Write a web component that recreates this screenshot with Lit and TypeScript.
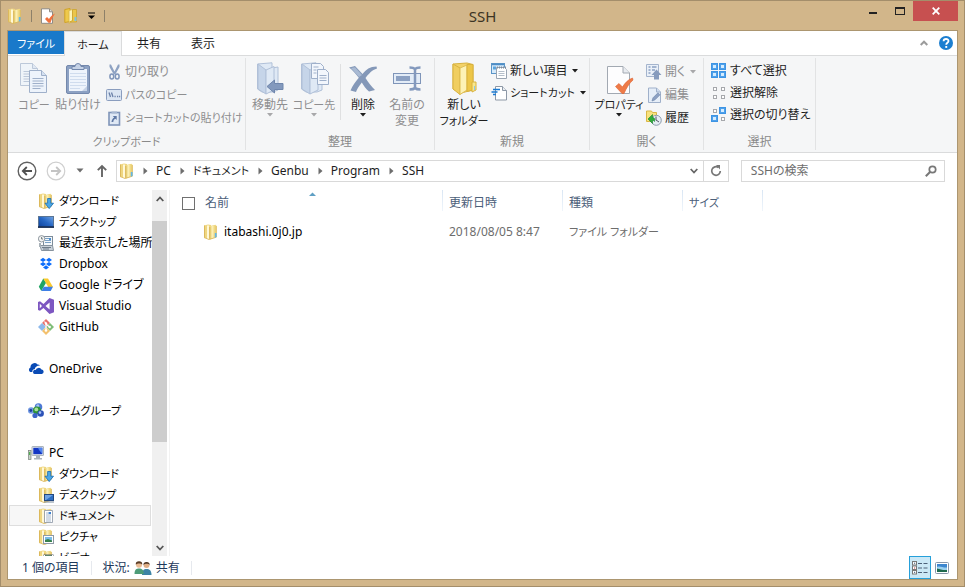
import { LitElement, html, css, svg, nothing, TemplateResult, SVGTemplateResult } from "lit";
import { customElement, state } from "lit/decorators.js";
import { classMap } from "lit/directives/class-map.js";

const icon = (w: number, h: number, body: SVGTemplateResult): TemplateResult =>
  html`<svg width=${w} height=${h} viewBox="0 0 ${w} ${h}" aria-hidden="true">${body}</svg>`;

const folderBase = svg`
  <path d="M1 1.500 L5 .5 L8 1 V13 L6 15.500 L1 13.500Z" fill="#efd680"/>
  <path d="M1.500 1.500 V13.500" stroke="#dcb95c"/>
  <path d="M7 2 L12.500 .8 L13.500 1.800 V13 L7 15.500Z" fill="#f0d983"/>
  <path d="M13.200 2 V13" stroke="#dcb95c"/>
  <path d="M5 1.500 V15" stroke="#fff8d8" stroke-width="2"/>
  <path d="M6.800 3 V15.200" stroke="#d0a94c" stroke-width=".8"/>
  <path d="M9.500 2 V14" stroke="#fbeeb4" stroke-width="2"/>
  <path d="M1 13.500 L6 15.500 L13.500 13.200" fill="none" stroke="#d9b658" stroke-width=".8"/>`;

const folder16 = icon(16, 16, svg`${folderBase}<path d="M11.800 9 h1.800 v4 l-1.800 .8Z" fill="#62b7e6"/>`);
const folderQuick = icon(16, 16, svg`<path d="M.8 1.500 L6 .5 V13.500 L.8 14.500Z" fill="#eec94c" stroke="#cfa227"/><path d="M5 2.500 L8.500 1.500 V13 L5 15.500Z" fill="#fdf4b8" stroke="#d7b549" stroke-width=".8"/><path d="M8.500 1.500 H12.500 V14 H5.500 L8.500 12.500Z" fill="#eac64b" stroke="#cda52e" stroke-width=".8"/><path d="M10.500 9 h2 v4 h-2Z" fill="#7cc3e8"/>`);
const folderDown = icon(16, 16, svg`${folderBase}<path d="M9.600 5.500 h3.200 v4.700 h2.700 L11.200 15.600 L7 10.200 h2.600Z" fill="#4aa7e8" stroke="#1769ae" stroke-width=".8"/>`);
const folderDesk = icon(16, 16, svg`${folderBase}<rect x="6.500" y="7.500" width="9" height="6" fill="#2d6fc4" stroke="#24497f"/><path d="M7 8 h8 L8 13 H7Z" fill="#6da3e4"/><path d="M6 15 h10" stroke="#7d8b9c"/>`);
const folderDoc = icon(16, 16, svg`${folderBase}<path d="M6.500 2.500 h8 v12 h-8Z" fill="#fff" stroke="#8a96a5" stroke-width=".8"/><path d="M8 5 h2 M8 7 h5 M8 9 h5 M8 11 h5 M8 13 h5" stroke="#90a6c0" stroke-width=".8"/><rect x="10.500" y="4" width="2.500" height="2" fill="#3e82d0"/>`);
const folderPic = icon(16, 16, svg`${folderBase}<rect x="5.500" y="6.500" width="10" height="8" fill="#fff" stroke="#8f9aa6"/><rect x="7" y="8" width="7" height="5" fill="#79bce8"/><path d="M7 13 v-2 l3 -1 4 1.500 V13Z" fill="#38814c"/>`);
const folderVid = icon(16, 16, svg`${folderBase}<rect x="5.500" y="4.500" width="10" height="10" fill="#5a6470"/><rect x="7.500" y="5.500" width="6" height="4" fill="#62a96a"/><path d="M6.500 5 V14 M14.500 5 V14" stroke="#fff" stroke-dasharray="1 1"/>`);
const desktop = icon(16, 16, svg`<defs><linearGradient id="dk" x1="0" y1="1" x2="1" y2="0"><stop offset="0" stop-color="#0d3f98"/><stop offset=".5" stop-color="#2566c4"/><stop offset="1" stop-color="#72a5e4"/></linearGradient></defs><rect x=".5" y="2.500" width="15" height="11" fill="url(#dk)" stroke="#5b7594"/><path d="M0 13 h16" stroke="#1b2f52" stroke-width="1.600"/>`);
const recent = icon(16, 16, svg`<rect x="5.500" y="1.500" width="9" height="9" fill="#f4f8fb" stroke="#7d8c9a"/><path d="M7 3.500 h4 M7 5.500 h6 M7 7.500 h6" stroke="#7aa1c6"/><rect x="11" y="3" width="2" height="2" fill="#4d8fd0"/><circle cx="3.600" cy="3.800" r="3.200" fill="#f3f3f3" stroke="#8d979f"/><path d="M3.600 2 V4 H5" stroke="#566" fill="none" stroke-width=".8"/><path d="M2 10.500 h12.500 l1 5 h-12Z" fill="#c9d1d9" stroke="#87939e"/><path d="M4 12.500 h9 M5 14 h6" stroke="#6f7d8a"/><path d="M2 8 V12" stroke="#a8b1b8" stroke-width="2"/>`);
const dropbox = icon(16, 16, svg`<g fill="#0d6efc"><path d="M5 1.800 L8 3.900 L5 6 L2 3.900Z"/><path d="M11 1.800 L14 3.900 L11 6 L8 3.900Z"/><path d="M5 6 L8 8.100 L5 10.200 L2 8.100Z"/><path d="M11 6 L14 8.100 L11 10.200 L8 8.100Z"/><path d="M8 9.200 L11 11.400 L8 13.500 L5 11.400Z"/></g>`);
const gdrive = icon(16, 16, svg`<path d="M5.300 1.500 L.8 9.800 L3.300 14 L8 5.700Z" fill="#1fa463"/><path d="M5.300 1.500 H10 L15 10 H10.200Z" fill="#fbc92c"/><path d="M5.800 9.800 H15 L12.700 14 H3.300Z" fill="#3e7fe6"/>`);
const vstudio = icon(16, 16, svg`<path d="M11.500 0 L16 1.800 V14.200 L11.500 16 L5.500 10 L2 12.800 L0 12 V4 L2 3.200 L5.500 6 Z M11.600 4.600 L7.500 8 L11.600 11.400Z M1.800 5.800 V10.200 L4 8Z" fill="#7d57c1" fill-rule="evenodd"/>`);
const github = icon(16, 16, svg`<path d="M8 0 L12 4 L8 8 L4 4Z" fill="#e9726b"/><path d="M4 4 L8 8 L4 12 L0 8Z" fill="#8db9ec"/><path d="M12 4 L16 8 L12 12 L8 8Z" fill="#7fbd78"/><path d="M8 8 L12 12 L8 16 L4 12Z" fill="#f3c06c"/><path d="M6.500 2.500 L8 4.500 V12 M8 5 L11.500 8" fill="none" stroke="#fff" stroke-width="1.200"/><circle cx="8" cy="4.500" r="1.200" fill="#fff"/><circle cx="8" cy="11.500" r="1.300" fill="#fff"/><circle cx="11.700" cy="8" r="1.200" fill="#fff"/>`);
const onedrive = icon(16, 16, svg`<path d="M2.200 11 A2.500 2.500 0 0 1 2.500 6.500 A4 4 0 0 1 9.500 3.500 A3 3 0 0 1 12 4.500 C8.500 4.500 7 6.500 6.800 8 C4.500 8.300 4 10 4.500 11Z" fill="#0a4bb5"/><path d="M6.500 13 A2 2 0 0 1 7.700 9 A3.200 3.200 0 0 1 13.500 8.500 A2.300 2.300 0 0 1 14 13Z" fill="#0a4bb5"/>`);
const homegroup = icon(16, 16, svg`<circle cx="3.200" cy="7.500" r="3.200" fill="#6f97e2"/><circle cx="2.800" cy="7.500" r="1.400" fill="#1f3f9c"/><circle cx="10.500" cy="4" r="3.800" fill="#4d79d6"/><circle cx="9.800" cy="2.800" r="1.500" fill="#a9c4f5"/><circle cx="9" cy="7.500" r="4" fill="#2f9238"/><circle cx="8.300" cy="6.400" r="1.900" fill="#a6e09a"/><circle cx="12.700" cy="10.500" r="3.200" fill="#2c52b8"/><circle cx="7" cy="12.500" r="2.600" fill="#3c63c8"/><circle cx="12" cy="9.600" r="1.300" fill="#a9c1f4"/>`);
const pc = icon(16, 16, svg`<rect x="4" y="1.500" width="11.500" height="9" rx=".5" fill="#e4e8ec" stroke="#9aa4ae" stroke-width=".8"/><rect x="5.300" y="2.800" width="9" height="6.400" fill="#1336c4"/><path d="M10 2.800 h4.300 v6 L11 5Z" fill="#5084ee"/><path d="M8 11 h4 v2 h2 v1.500 h-8 V13 h2Z" fill="#aab3bb"/><rect x=".5" y="5.500" width="2.500" height="9" fill="#c8d0c8" stroke="#76807a" stroke-width=".7"/><path d="M1.700 7 v3" stroke="#37a637"/>`);

const NAVY = "#8498b8";
const page = (x: number, y: number) => svg`<path d="M${x} ${y} h12 l5 5 v17 h-17Z" fill="#edf3fb" stroke="#9fb0ca"/><path d="M${x + 12} ${y} v5 h5" fill="#d5e1f1" stroke="#9fb0ca"/><path d="M${x + 3} ${y + 8} h11 M${x + 3} ${y + 10.5} h11 M${x + 3} ${y + 13} h11 M${x + 3} ${y + 15.5} h11 M${x + 3} ${y + 18} h8" stroke="#9fb0ca"/>`;
const bigCopy = icon(32, 34, svg`<g opacity=".65">${page(2.5, 1.5)}</g>${page(11.5, 8.5)}`);
const bigPaste = icon(32, 34, svg`<rect x="4.500" y="3.500" width="23" height="28" rx="1.500" fill="#8ca1c3" stroke="#7388ac"/><rect x="7" y="7" width="18" height="22" fill="#eef4fc"/><path d="M8 11.500 h16 M8 14.500 h16 M8 17.500 h16 M8 20.500 h16 M8 23.500 h16 M8 26.500 h10" stroke="#cfdcee"/><path d="M10 7.500 V4.500 H13 A3 3 0 0 1 19 4.500 H22 V7.500Z" fill="#c5d2e6" stroke="#7388ac"/><path d="M20 29 l5 -5 v5Z" fill="#c5d2e6"/>`);
const bigFolderShape = (a: string, b: string, s: string) => svg`<path d="M4.500 2 L19 .8 V6 L25 5 V28 L20 30 H9 L4.500 27Z" fill="${a}" stroke="${s}"/><path d="M5 2 L13 8 V32 L5 27Z" fill="${b}" stroke="${s}"/><path d="M13 8 L21 4.500 V28 L13 32Z" fill="${a}" stroke="${s}"/>`;
const bigMove = icon(34, 34, svg`${bigFolderShape("#dfe9f5", "#c6d5e9", "#b0c0d8")}<path d="M14 24.500 L21.500 18 V21.500 H30 V27.500 H21.500 V31Z" fill="#8399bd" stroke="#6f86ac"/>`);
const bigCopyTo = icon(34, 34, svg`${bigFolderShape("#dfe9f5", "#c6d5e9", "#b0c0d8")}<g fill="#f2f6fc" stroke="#9fb0ca"><path d="M14.500 1.500 h9 l3 3 v12 h-12Z"/><path d="M20.500 7.500 h8 l3 3 v12 h-11Z"/></g><path d="M22.500 13.500 h7 M22.500 16 h7 M22.500 18.500 h7 M16.500 5 h5 M16.500 8 h3 M16.500 11 h3" stroke="#9fb0ca"/>`);
const bigDelete = icon(32, 34, svg`<path d="M2 5.500 L8 4 L15.500 12 C19 7.500 23 4.500 29.500 4.500 L30 6.500 C25 8 21.500 12 18.500 16 C21 20 24 24 28 28 L22 29.500 C19 27 16.500 23.500 14.800 20.500 C12 24 9.500 28 9 30 L3.500 28.500 C5.500 24 8.500 19.500 11.800 15.800 C8.500 11.500 5.500 8 2 5.500Z" fill="${NAVY}"/><path d="M4 6 L8 5.200 L15 13 L12 15Z" fill="#a9bad3"/>`);
const bigRename = icon(32, 34, svg`<rect x="2.500" y="11.500" width="27" height="10" fill="#e3ecf7" stroke="#7f95b9"/><rect x="5" y="14" width="14" height="5" fill="#8ca1c3"/><path d="M18.500 5.500 C21 5.500 23 6 24 7 C25 6 27 5.500 29.500 5.500 M24 7 V26 M18.500 27.500 C21 27.500 23 27 24 26 C25 27 27 27.500 29.500 27.500" fill="none" stroke="#8399bd" stroke-width="2.500"/>`);
const bigNewFolder = icon(32, 34, svg`<path d="M5 2 L19 1 L25 2.500 V28 L13 31 L5 27Z" fill="#f3d268" stroke="#d8b23f"/><path d="M5 2 L12 6 V32.500 L5 27Z" fill="#f0ce60" stroke="#d8b23f"/><path d="M12 6 L19 3 V28 L12 32.500Z" fill="#fdf2b6" stroke="#e0bf55"/><path d="M19 2.500 L25 2.500 V28 L19 29.500Z" fill="#edc648" stroke="#d8b23f"/><path d="M24 20 h4 v8 l-4 2Z" fill="#f9e88e" stroke="#d8b23f"/><path d="M26.500 24 v4" stroke="#8cc8e8"/>`);
const bigProps = icon(32, 34, svg`<path d="M4.500 4.500 H20 L26.500 11 V31.500 H4.500Z" fill="#fdfdfe" stroke="#a2a9b2"/><path d="M20 4.500 V11 H26.500" fill="#e8ebf0" stroke="#a2a9b2"/><path d="M12.500 24.500 L16 21.500 L19.500 25 C22 21 25 17.500 29.500 16 L30 18 C26 21.500 23.500 26 21 31.500 H19Z" fill="#ee7b48" stroke="#dd6230" stroke-width=".6"/>`);

const cut = icon(16, 16, svg`<path d="M3.500 .5 L5 .5 L8.500 7.500 L12 .5 H13.500 V3 L9.500 10 L8.500 10.500 L7.500 10 L3.500 3Z" fill="#8ea2c2"/><g fill="none" stroke="#8096ba" stroke-width="1.500"><ellipse cx="5.800" cy="12.500" rx="1.900" ry="2.500"/><ellipse cx="11.200" cy="12.500" rx="1.900" ry="2.500"/></g>`);
const pathCopy = icon(16, 16, svg`<rect x=".5" y="2.500" width="15" height="11" rx="1" fill="#dbe5f2" stroke="#8a9dbe"/><path d="M3 5.500 L4.500 10 M5.500 5.500 L7 10" stroke="#6b81a8" stroke-width="1.300"/><path d="M8.500 9.500 h1.200 M11 9.500 h1.200 M13 9.500 h1.200" stroke="#6b81a8" stroke-width="1.300"/>`);
const pasteLink = icon(16, 16, svg`<rect x="3" y="2.500" width="10.500" height="12.500" fill="#dfe8f4" stroke="#7f94b8" stroke-width="1.600"/><path d="M5.500 3.500 V1.500 H11 V3.500Z" fill="#a7b7d1"/><path d="M10.700 6 V10 L9.500 8.800 C8 9.500 7.300 10.500 7.300 12 L5.500 12 C5.600 10 6.500 8.300 8.200 7.400 L6.800 6Z" fill="#5f78a4"/>`);
const newItem = icon(16, 16, svg`<rect x=".5" y=".5" width="13" height="10" fill="#d6eafa" stroke="#5a95c8"/><path d="M1 1.500 h12" stroke="#4c8cc6" stroke-width="1.500"/><rect x="2" y="3.500" width="3" height="3" fill="#5ba4dc"/><path d="M5.500 4.500 h8 l2 2 v9 h-10Z" fill="#fff" stroke="#9aa5b2"/><path d="M6 4.500 h9" stroke="#7c8b9c" stroke-dasharray="1 1" stroke-width="2"/><path d="M7.500 8.500 h6 M7.500 10.500 h6 M7.500 12.500 h6" stroke="#b5bfca"/>`);
const shortcut = icon(16, 16, svg`<path d="M4.500 1.500 h7 l4 4 v9.500 h-11Z" fill="#fff" stroke="#8d98a6"/><path d="M11.500 1.500 v4 h4" fill="#e9edf2" stroke="#8d98a6"/><path d="M2 4.500 h7 M.5 7 h6 M2 9.500 h3" stroke="#1a7ad2" stroke-width="1.500"/>`);
const openIc = icon(16, 16, svg`<path d="M.5 .5 h12 v12 h-12Z" fill="#eaf0f8" stroke="#a4b4cd"/><path d="M2.500 3 h2 M6 3 h4.500 M2.500 6 h2 M6 6 h3 M2.500 9 h2" stroke="#8aa0c2" stroke-width="1.500"/><path d="M10.500 5.500 L15.500 11 H13 V15.500 H8 V11 H5.500Z" fill="#869bbd"/>`);
const edit = icon(16, 16, svg`<path d="M2.500 1 h8 l4 4 v10.500 h-12Z" fill="#e6eef8" stroke="#9fb0ca"/><path d="M10.500 1 v4 h4" fill="#d0ddef" stroke="#9fb0ca"/><path d="M6 14 L7 10.800 L12 5.800 L14 7.800 L9 12.800Z" fill="#8ca1c3" stroke="#7389ae" stroke-width=".7"/>`);
const history = icon(16, 16, svg`<path d="M.5 1 h5 l1 1.500 h4 v9 h-10Z" fill="#f8e27e" stroke="#d9b645"/><circle cx="10.300" cy="10.300" r="5" fill="#e5ecf3" stroke="#8b9bab"/><path d="M10 6.500 V10 L13 12" fill="none" stroke="#556"/><path d="M2 9 L6.500 4.500 V7.500 C9 7.500 9 10 8.500 11.500 C8 10.500 7.500 10.500 6.500 10.500 V13.500Z" fill="#2fae3a" stroke="#16832a" stroke-width=".6"/>`);
const cell = (x: number, y: number, on: boolean) => on
  ? svg`<rect x="${x + 0.5}" y="${y + 0.5}" width="6" height="6" fill="#4ea0ea" stroke="#3d94e4"/><rect x="${x + 2}" y="${y + 2}" width="3" height="3" fill="#d4ecff"/>`
  : svg`<rect x="${x + 2.5}" y="${y + 2.5}" width="3" height="3" fill="#fff" stroke="#a6a8ac"/>`;
const cells = (a: boolean, b: boolean, c: boolean, d: boolean) => icon(16, 16, svg`${cell(0, 0, a)}${cell(8, 0, b)}${cell(0, 8, c)}${cell(8, 8, d)}`);

const caret = icon(6, 4, svg`<path d="M0 0 H6 L3 3.500Z" fill="currentColor"/>`);
const chevron = icon(5, 8, svg`<path d="M.5 .5 L4.500 4 L.5 7.500Z" fill="#6d6d6d"/>`);
const people = icon(18, 16, svg`<path d="M8 15 c0 -5 2 -6 4.500 -6 c3 0 5 1.500 5 6Z" fill="#3d84a6"/><circle cx="12.500" cy="5" r="3" fill="#e0ae86"/><path d="M9.300 4.800 a3.300 3.300 0 0 1 6.500 0 c-1 -1.300 -4.500 -1.800 -6.500 0Z" fill="#4b3526"/><path d="M.5 14 c0 -4.500 2 -5.500 4.500 -5.500 c3 0 4.800 1.500 4.800 5.500Z" fill="#4d9c78"/><circle cx="5" cy="4.800" r="3" fill="#e9bb94"/><path d="M1.700 4.600 a3.300 3.300 0 0 1 6.600 0 c-1.200 -1.300 -4.500 -1.800 -6.600 0Z" fill="#5a3c26"/>`);

interface Cmd { label: string; icon: TemplateResult; off?: boolean; menu?: boolean; second?: string; }
interface Group { name: string; cls: string; big: Cmd[]; big2?: Cmd[]; small: Cmd[]; }

const groups: Group[] = [
  {
    name: "クリップボード", cls: "clip",
    big: [{ label: "コピー", icon: bigCopy, off: true }, { label: "貼り付け", icon: bigPaste, off: true }],
    small: [{ label: "切り取り", icon: cut, off: true }, { label: "パスのコピー", icon: pathCopy, off: true }, { label: "ショートカットの貼り付け", icon: pasteLink, off: true }],
  },
  {
    name: "整理", cls: "organize",
    big: [{ label: "移動先", icon: bigMove, off: true, menu: true }, { label: "コピー先", icon: bigCopyTo, off: true, menu: true }],
    big2: [{ label: "削除", icon: bigDelete, menu: true }, { label: "名前の", second: "変更", icon: bigRename, off: true }],
    small: [],
  },
  {
    name: "新規", cls: "create",
    big: [{ label: "新しい", second: "フォルダー", icon: bigNewFolder }],
    small: [{ label: "新しい項目", icon: newItem, menu: true }, { label: "ショートカット", icon: shortcut, menu: true }],
  },
  {
    name: "開く", cls: "open",
    big: [{ label: "プロパティ", icon: bigProps, menu: true }],
    small: [{ label: "開く", icon: openIc, off: true, menu: true }, { label: "編集", icon: edit, off: true }, { label: "履歴", icon: history }],
  },
  {
    name: "選択", cls: "select",
    big: [],
    small: [{ label: "すべて選択", icon: cells(true, true, true, true) }, { label: "選択解除", icon: cells(false, false, false, false) }, { label: "選択の切り替え", icon: cells(false, true, true, false) }],
  },
];

interface Place { label: string; icon: TemplateResult; top?: boolean; gap?: boolean; current?: boolean; }
const places: Place[] = [
  { label: "ダウンロード", icon: folderDown },
  { label: "デスクトップ", icon: desktop },
  { label: "最近表示した場所", icon: recent },
  { label: "Dropbox", icon: dropbox },
  { label: "Google ドライブ", icon: gdrive },
  { label: "Visual Studio", icon: vstudio },
  { label: "GitHub", icon: github },
  { label: "OneDrive", icon: onedrive, top: true, gap: true },
  { label: "ホームグループ", icon: homegroup, top: true, gap: true },
  { label: "PC", icon: pc, top: true, gap: true },
  { label: "ダウンロード", icon: folderDown },
  { label: "デスクトップ", icon: folderDesk },
  { label: "ドキュメント", icon: folderDoc, current: true },
  { label: "ピクチャ", icon: folderPic },
  { label: "ビデオ", icon: folderVid },
];

const trail = ["PC", "ドキュメント", "Genbu", "Program", "SSH"];

const label = (text: string) =>
  html`<span class=${classMap({ kana: /[ァ-ヶ]/.test(text) && !/[A-Za-z]/.test(text) })}>${text}</span>`;

@customElement("app-root")
export class AppRoot extends LitElement {
  @state() private allChecked = false;

  static styles = css`
    :host {
      display: flex; flex-direction: column; box-sizing: border-box;
      height: 100vh; min-height: 400px; padding: 0 6px 6px;
      background: #d2b68a; border: 1px solid #a48e6b; color: #1e1e1e;
      font: 12px/16px "Noto Sans", "Noto Sans CJK JP", sans-serif;
      font-feature-settings: "palt";
    }
    * { box-sizing: border-box; }
    svg { display: block; flex: none; }
    button, input { font: inherit; font-feature-settings: inherit; color: inherit; }
    button { border: 0; padding: 0; margin: 0; background: none; white-space: nowrap; display: flex; flex: none; align-items: center; }
    a { color: inherit; text-decoration: none; }
    .kana { font-size: 11px; }

    .titlebar { flex: none; height: 29px; display: grid; grid-template-columns: 1fr auto 1fr; align-items: center; }
    .quick { display: flex; align-items: center; color: #000; gap: 8px; }
    .quick .bar { width: 1px; height: 12px; background: #8d8069; }
    .title { margin: 0; font-size: 15px; line-height: 20px; font-weight: 400; color: #3c3424; }
    .caption { display: flex; justify-content: flex-end; align-self: start; }
    .caption button { justify-content: center; width: 27px; height: 20px; }
    .caption .close { width: 45px; background: #c75050; }

    .client { flex: 1; min-height: 0; display: flex; flex-direction: column; background: #fff; border: 1px solid #ac9670; }
    .tabs { flex: none; height: 25px; display: flex; border-bottom: 1px solid #dadbdc; }
    .tabs button { justify-content: center; width: 54px; padding-top: 2px; }
    .tabs .file { width: 56px; height: 23px; background: #1979ca; color: #fff; }
    .tabs .home { width: 58px; height: 25px; background: #f5f6f7; border: 1px solid #dadbdc; border-bottom: 0; }
    .tabs .space { flex: 1; }
    .tabs .mini { width: 22px; padding-top: 0; }

    .ribbon { flex: none; display: flex; height: 97px; background: #f5f6f7; border-bottom: 1px solid #dadbdc; padding: 2px 0; }
    .group { display: flex; flex-direction: column; border-right: 1px solid #e2e3e4; }
    .clip { width: 238px; }
    .organize { width: 189px; }
    .create { width: 155px; }
    .open { width: 114px; }
    .select { width: 112px; }
    .body { flex: 1; display: flex; padding: 2px 0 0 4px; }
    .organize .body { padding-left: 2px; }
    .select .body { padding-left: 7px; }
    .caption-name { text-align: center; line-height: 16px; color: #8a8a8a; }
    .big { flex-direction: column; width: 44px; }
    .create .big, .open .big { width: 50px; }
    .big .pic { height: 37px; display: flex; align-items: center; }
    .small { display: flex; flex-direction: column; margin-left: 2px; }
    .small button { height: 23px; gap: 3px; }
    .small .menu { margin-left: 2px; }
    .create .small button, .select .small button { height: 22px; }
    .clip .small { margin-left: 6px; }
    .select .small { margin-left: 0; }
    .organize .split { width: 1px; height: 56px; margin: 4px 0 0 4px; background: #dfe0e1; }
    button:disabled { color: #8e8e90; }
    button:disabled .menu { color: #a8a8aa; }

    .address { flex: none; display: flex; align-items: center; height: 37px; padding: 0 12px 2px 9px; }
    .address .nav { width: 20px; height: 20px; justify-content: center; }
    .address .fwd { margin-left: 9px; }
    .address .recent { margin-left: 4px; }
    .address .up { margin: 0 4px 0 2px; }
    .path { flex: 1; display: flex; align-items: stretch; height: 22px; border: 1px solid #d9d9d9; padding-left: 2px; margin-right: 12px; }
    .path ol { flex: 1; display: flex; list-style: none; margin: 0 0 0 8px; padding: 0; }
    .path li { display: flex; align-items: center; gap: 8px; margin-right: 9px; }
    .path > button { width: 18px; justify-content: center; }
    .path > .reload { width: 25px; border-left: 1px solid #d9d9d9; }
    .path > svg { align-self: center; }
    .search { width: 22%; height: 22px; display: flex; align-items: center; border: 1px solid #d9d9d9; padding: 0 6px 0 9px; }
    .search input { flex: 1; min-width: 0; border: 0; outline: 0; padding: 0; background: none; }
    .search input::placeholder { color: #6d6d6d; opacity: 1; }

    .main { flex: 1; min-height: 0; display: flex; }
    .places { width: 144px; overflow: hidden; margin: 0; padding: 0 1px; list-style: none; }
    .places a { display: flex; align-items: center; gap: 5px; height: 21px; padding-left: 28px; border: 1px solid transparent; white-space: nowrap; color: #000; }
    .places .top a { padding-left: 18px; }
    .places .gap { margin-top: 21px; }
    .places .current a { background: #f7f7f7; border-color: #dedede; }
    .scroll { width: 15px; display: flex; flex-direction: column; background: #f0f0f0; margin-right: 2px; }
    .scroll button { height: 17px; justify-content: center; }
    .scroll .before { height: 14px; }
    .scroll .thumb { flex: 221; background: #cdcdcd; }
    .scroll .after { flex: 97; }
    .files { flex: 1; border-left: 1px solid #f2f2f2; }
    table { border-collapse: collapse; table-layout: fixed; width: 593px; }
    th, td { text-align: left; padding: 0 0 0 6px; font-weight: 400; }
    th { height: 31px; line-height: 26px; vertical-align: top; color: #4c607a; background: linear-gradient(#d9e6f4, #eff5fb) right top / 1px 21px no-repeat; }
    td { height: 21px; color: #6d6d6d; }
    .c-name { width: 273px; }
    .c-mid { width: 120px; }
    .c-size { width: 80px; }
    th .name { display: flex; align-items: center; height: 26px; gap: 10px; padding-left: 6px; }
    th .sort { margin: -18px auto 0 70px; }
    td .name { display: flex; align-items: center; gap: 5px; padding-left: 27px; color: #000; }
    input[type="checkbox"] { appearance: none; width: 13px; height: 13px; margin: 0; border: 1px solid #707070; background: #fff; }
    input[type="checkbox"]:checked { background: #1979ca; }

    .status { flex: none; height: 23px; display: flex; align-items: center; color: #1e395b; padding: 0 4px 0 14px; }
    .status .bar { width: 1px; height: 14px; background: #e6e9ee; margin: 0 11px; }
    .status .space { flex: 1; }
    .share { display: flex; align-items: center; gap: 4px; }
    .status button { width: 22px; height: 23px; justify-content: center; }
    .status .active { background: #cbe8f6; border: 1px solid #26a0da; }
  `;

  private big(c: Cmd) {
    return html`<button class="big" ?disabled=${c.off}>
      <span class="pic">${c.icon}</span>${label(c.label)}
      ${c.second ? label(c.second) : nothing}
      ${c.menu ? html`<span class="menu">${caret}</span>` : nothing}
    </button>`;
  }

  private small(c: Cmd) {
    return html`<button ?disabled=${c.off}>${c.icon}${label(c.label)}${c.menu ? html`<span class="menu">${caret}</span>` : nothing}</button>`;
  }

  private group(g: Group) {
    return html`<section class="group ${g.cls}" aria-label=${g.name}>
      <div class="body">
        ${g.big.map((c) => this.big(c))}
        ${g.big2 ? html`<span class="split"></span>${g.big2.map((c) => this.big(c))}` : nothing}
        ${g.small.length ? html`<div class="small">${g.small.map((c) => this.small(c))}</div>` : nothing}
      </div>
      <div class="caption-name">${label(g.name)}</div>
    </section>`;
  }

  render() {
    return html`
      <header class="titlebar">
        <div class="quick">
          ${folder16}<span class="bar"></span>
          <button aria-label="プロパティ">${icon(16, 16, svg`<path d="M1.500 .8 h8 l3 3 v11.500 h-11Z" fill="#fff" stroke="#8f8b84"/><path d="M9.500 .8 v3 h3" fill="#ddd" stroke="#8f8b84"/><path d="M5 11 L7 9 L9 11 C10.500 8.500 12.500 6.500 15 5.500 C13.500 8 11.500 11.500 10.500 14.800 H8.500Z" fill="#f0703c"/>`)}</button>
          <button aria-label="新しいフォルダー">${folderQuick}</button>
          <button aria-label="カスタマイズ">${icon(8, 8, svg`<path d="M0 1 h7" stroke="#000"/><path d="M0 3.500 h7 L3.500 7Z"/>`)}</button>
          <span class="bar"></span>
        </div>
        <h1 class="title">SSH</h1>
        <div class="caption">
          <button aria-label="最小化">${icon(8, 12, svg`<path d="M0 7 h8 v2 h-8Z" fill="#222"/>`)}</button>
          <button aria-label="最大化">${icon(10, 8, svg`<rect x=".5" y="1" width="9" height="6.500" fill="none" stroke="#222"/><path d="M0 1 h10" stroke="#222" stroke-width="2"/>`)}</button>
          <button class="close" aria-label="閉じる">${icon(8, 8, svg`<path d="M.7 .7 L7.300 7.300 M7.300 .7 L.7 7.300" stroke="#fff" stroke-width="1.800"/>`)}</button>
        </div>
      </header>
      <div class="client">
        <nav class="tabs">
          <button class="file">${label("ファイル")}</button>
          <button class="home">${label("ホーム")}</button>
          <button>共有</button>
          <button>表示</button>
          <span class="space"></span>
          <button class="mini" aria-label="リボンの最小化">${icon(8, 6, svg`<path d="M.7 5 L4 1.700 L7.300 5" fill="none" stroke="#9b9b9b" stroke-width="2"/>`)}</button>
          <button class="mini" aria-label="ヘルプ">${icon(14, 14, svg`<circle cx="7" cy="7" r="7" fill="#1b7ed0"/><path d="M4.600 5.300 C4.600 2.300 9.500 2.300 9.500 5 C9.500 6.800 7.200 6.800 7.200 8.800" fill="none" stroke="#fff" stroke-width="1.800"/><rect x="6.300" y="10" width="1.900" height="1.900" fill="#fff"/>`)}</button>
        </nav>
        <div class="ribbon">${groups.map((g) => this.group(g))}</div>
        <div class="address">
          <button class="nav" aria-label="戻る">${icon(20, 20, svg`<circle cx="10" cy="10" r="8.800" fill="none" stroke="#606060" stroke-width="1.400"/><path d="M15 10 H6 M9.800 6 L5.800 10 L9.800 14" fill="none" stroke="#505050" stroke-width="1.800"/>`)}</button>
          <button class="nav fwd" aria-label="進む">${icon(20, 20, svg`<circle cx="10" cy="10" r="8.800" fill="none" stroke="#cfcfcf" stroke-width="1.200"/><path d="M5 10 H14 M10.200 6 L14.200 10 L10.200 14" fill="none" stroke="#c4c4c4" stroke-width="1.800"/>`)}</button>
          <button class="nav recent" aria-label="最近表示した場所">${icon(8, 5, svg`<path d="M.5 .5 H7.500 L4 4.500Z" fill="#6d6d6d"/>`)}</button>
          <button class="nav up" aria-label="上へ">${icon(12, 14, svg`<path d="M6 13 V2 M1.800 6.200 L6 2 L10.200 6.200" fill="none" stroke="#666" stroke-width="1.900"/>`)}</button>
          <div class="path">
            ${folder16}
            <ol>${trail.map((t) => html`<li>${chevron}<a href="#">${label(t)}</a></li>`)}</ol>
            <button aria-label="以前の場所">${icon(8, 6, svg`<path d="M.7 1 L4 4.500 L7.300 1" fill="none" stroke="#666" stroke-width="1.800"/>`)}</button>
            <button class="reload" aria-label="最新の情報に更新">${icon(12, 12, svg`<path d="M8.500 2.500 A4.300 4.300 0 1 0 10.300 6" fill="none" stroke="#777" stroke-width="1.700"/><path d="M6 0 H10 V4.500Z" fill="#777"/>`)}</button>
          </div>
          <div class="search">
            <input type="search" aria-label="SSHの検索" placeholder="SSHの検索" />
            <button aria-label="検索">${icon(14, 12, svg`<circle cx="8.500" cy="4.500" r="3.200" fill="none" stroke="#777" stroke-width="1.700"/><path d="M6 7 L1.800 11.200" stroke="#777" stroke-width="2"/>`)}</button>
          </div>
        </div>
        <div class="main">
          <ul class="places">
            ${places.map((p) => html`<li class=${classMap({ top: !!p.top, gap: !!p.gap, current: !!p.current })}><a href="#">${p.icon}${label(p.label)}</a></li>`)}
          </ul>
          <div class="scroll">
            <button aria-label="上にスクロール">${icon(8, 6, svg`<path d="M.7 5 L4 1.500 L7.300 5" fill="none" stroke="#555" stroke-width="1.800"/>`)}</button>
            <span class="before"></span><span class="thumb"></span><span class="after"></span>
            <button aria-label="下にスクロール">${icon(8, 6, svg`<path d="M.7 1 L4 4.500 L7.300 1" fill="none" stroke="#555" stroke-width="1.800"/>`)}</button>
          </div>
          <div class="files">
            <table>
              <colgroup><col class="c-name" /><col class="c-mid" /><col class="c-mid" /><col class="c-size" /></colgroup>
              <thead>
                <tr>
                  <th><div class="name"><input type="checkbox" aria-label="すべて選択" .checked=${this.allChecked} @change=${() => (this.allChecked = !this.allChecked)} /><span>名前</span><span class="sort">${icon(7, 4, svg`<path d="M0 4 L3.500 .5 L7 4Z" fill="#5f9fc4"/>`)}</span></div></th>
                  <th>更新日時</th><th>種類</th><th>${label("サイズ")}</th>
                </tr>
              </thead>
              <tbody>
                <tr><td><div class="name">${folder16}<a href="#">itabashi.0j0.jp</a></div></td><td>2018/08/05 8:47</td><td>${label("ファイル フォルダー")}</td><td></td></tr>
              </tbody>
            </table>
          </div>
        </div>
        <footer class="status">
          <span>1 個の項目</span><span class="bar"></span>
          <span class="share"><span>状況:</span>${people}<span>共有</span></span><span class="bar"></span>
          <span class="space"></span>
          <button class="active" aria-label="詳細">${icon(16, 14, svg`<g fill="#fff" stroke="#777"><rect x=".5" y=".5" width="4" height="3.500"/><rect x=".5" y="5" width="4" height="3.500"/><rect x=".5" y="9.500" width="4" height="3.500"/></g><path d="M6 2.500 h4 M11.500 2.500 h4 M6 7 h4 M11.500 7 h4 M6 11.500 h4 M11.500 11.500 h4" stroke="#4c6078"/><path d="M2 7 h1.200" stroke="#b33"/><path d="M2 2.200 h1.200 M2 11.300 h1.200" stroke="#357"/>`)}</button>
          <button aria-label="大アイコン">${icon(14, 12, svg`<rect x=".5" y=".5" width="13" height="11" rx="1" fill="#fff" stroke="#8796aa"/><rect x="2" y="2" width="10" height="8" fill="#3c86cf"/><path d="M2 5 C5 3.500 8 6 12 5.500 V8 H2Z" fill="#9bd0ee"/><path d="M2 10 V6.500 C5 7 8 8.500 12 8 V10Z" fill="#1f6a4d"/>`)}</button>
        </footer>
      </div>
    `;
  }
}
